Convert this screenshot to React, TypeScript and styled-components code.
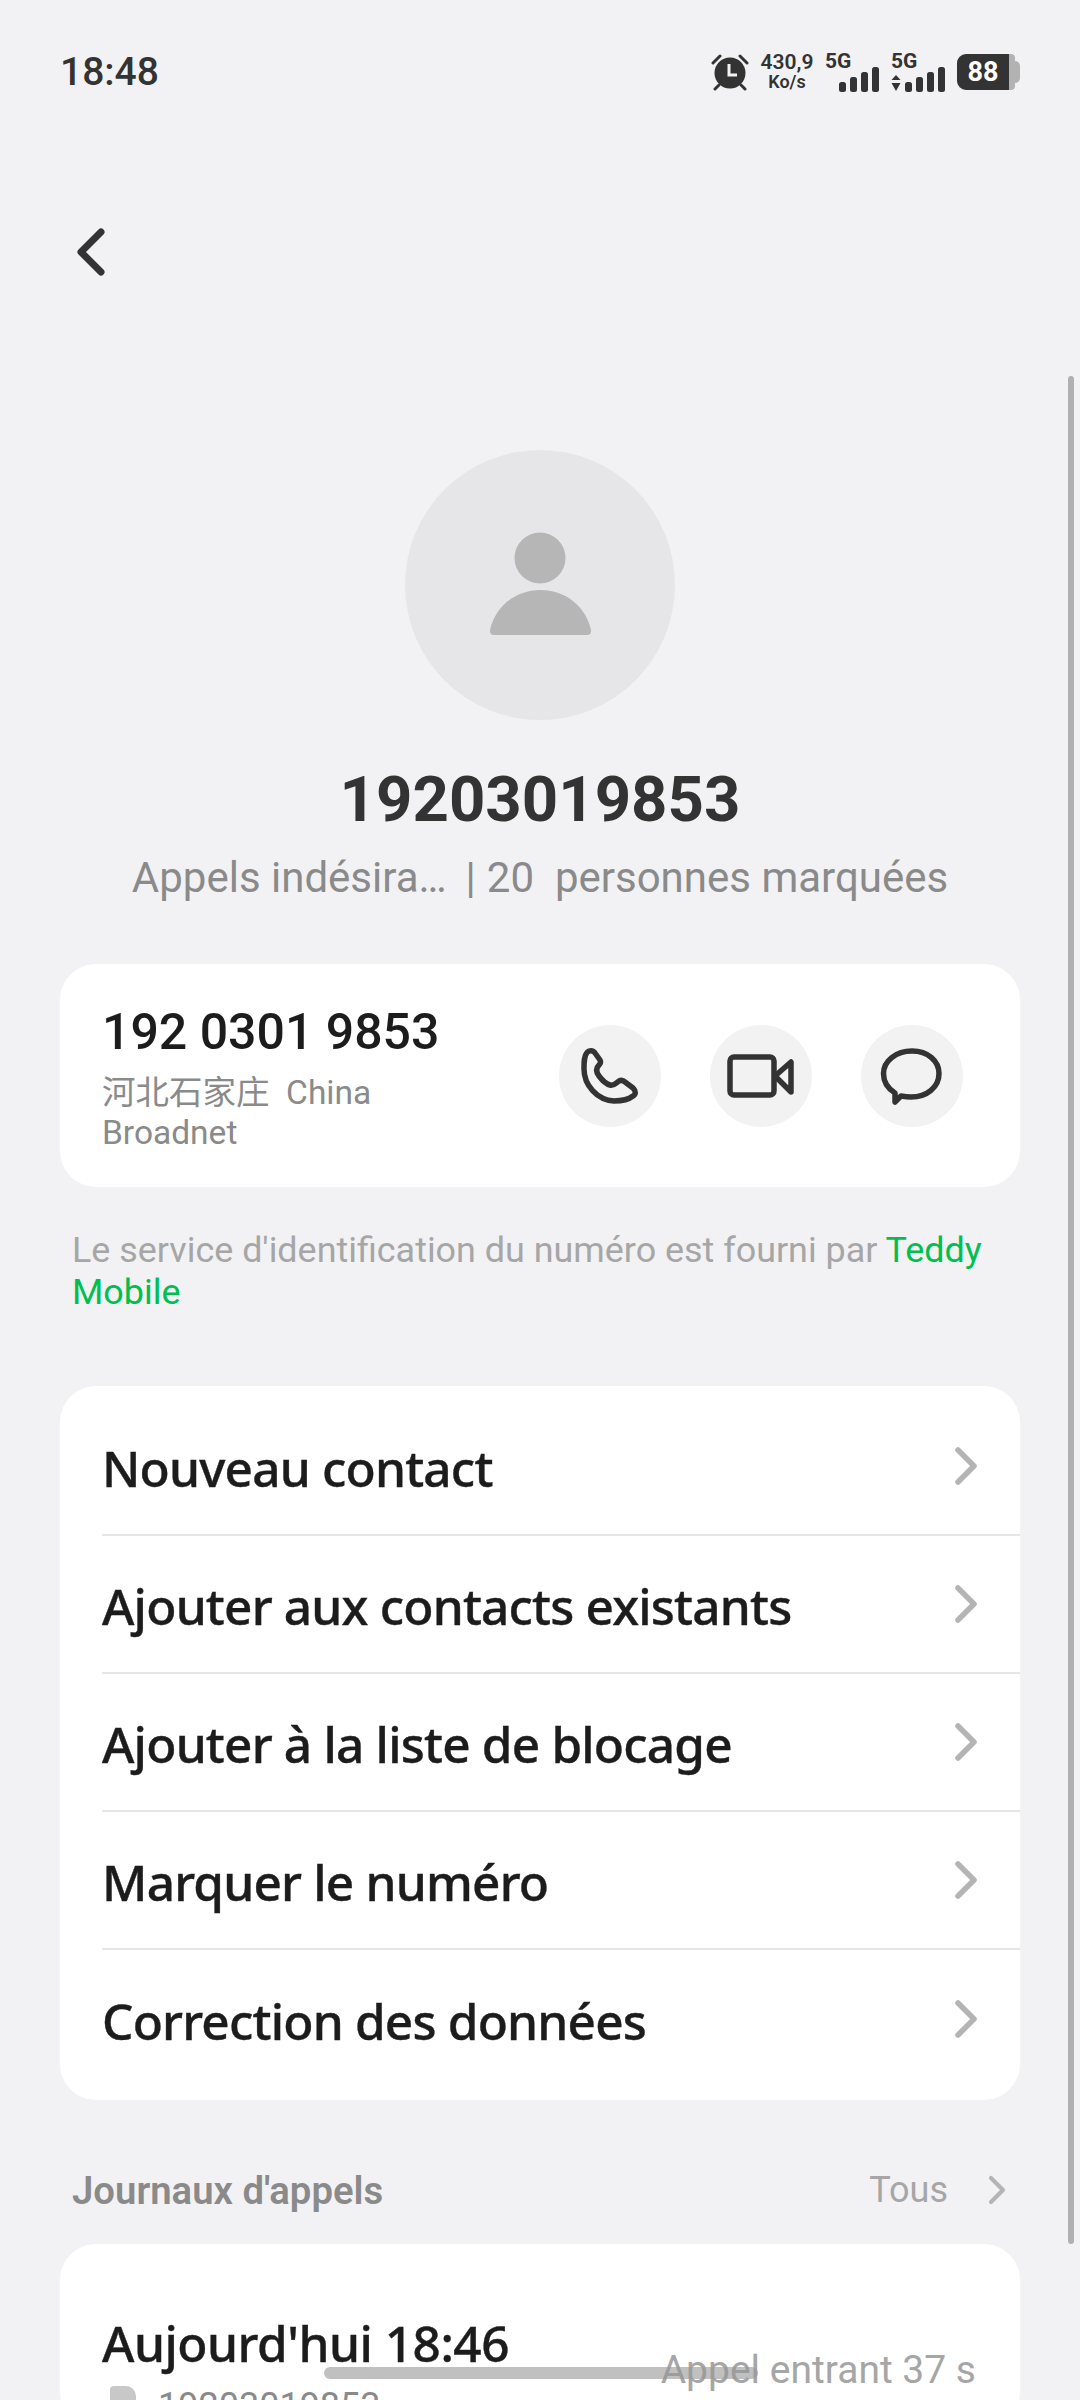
import React from "react";
import styled, { createGlobalStyle } from "styled-components";

const colors = {
  page: "#f2f2f4",
  white: "#ffffff",
  ink: "#1c1c1c",
  dark: "#333333",
  gray: "#8a8a8a",
  muted: "#a6a6a6",
  chevron: "#b4b4b4",
  green: "#00bf50",
  line: "#e6e6e6",
};

const GlobalStyle = createGlobalStyle`
  html, body {
    margin: 0;
    padding: 0;
    background: ${colors.page};
  }
  * {
    box-sizing: border-box;
  }
`;

const Screen = styled.div`
  position: relative;
  width: 1080px;
  height: 2400px;
  overflow: hidden;
  background: ${colors.page};
  font-family: Roboto, "Noto Sans CJK SC", sans-serif;
`;

const StatusBar = styled.div`
  display: flex;
  align-items: center;
  justify-content: space-between;
  height: 144px;
  padding: 0 60px;
`;

const Clock = styled.span`
  font-size: 39px;
  font-weight: 500;
  color: ${colors.dark};
`;

const StatusIcons = styled.div`
  display: flex;
  align-items: center;
  height: 36px;
`;

const Speed = styled.div`
  display: flex;
  flex-direction: column;
  align-items: center;
  width: 54px;
  margin-left: 11px;
  color: ${colors.dark};
  line-height: 19px;

  b {
    font-size: 21px;
    font-weight: 600;
  }

  span {
    font-size: 18px;
    font-weight: 600;
  }
`;

const Signal = styled.div<{ gap: number }>`
  display: flex;
  flex-direction: column;
  width: 56px;
  margin-left: ${(p) => p.gap}px;
  color: ${colors.dark};
`;

const SignalLabel = styled.span`
  height: 14px;
  font-size: 21px;
  font-weight: 700;
  line-height: 16px;
`;

const Battery = styled.div`
  display: flex;
  align-items: center;
  margin-left: 10px;
`;

const BatteryBody = styled.div`
  display: flex;
  align-items: center;
  justify-content: center;
  width: 58px;
  height: 36px;
  padding-right: 6px;
  border-radius: 9px 4px 4px 9px;
  background: linear-gradient(
    90deg,
    ${colors.dark} 0,
    ${colors.dark} 52px,
    #b2b2b2 52px
  );
  color: ${colors.white};
  font-size: 27px;
  font-weight: 700;
`;

const BatteryTip = styled.div`
  width: 5px;
  height: 22px;
  border-radius: 0 5px 5px 0;
  background: #b2b2b2;
`;

const NavRow = styled.div`
  display: flex;
  align-items: center;
  height: 212px;
  padding-left: 72px;
`;

const Header = styled.div`
  display: flex;
  flex-direction: column;
  align-items: center;
  margin-top: 94px;
`;

const Avatar = styled.div`
  width: 270px;
  height: 270px;
  border-radius: 50%;
  background: #e6e6e8;

  svg {
    display: block;
  }
`;

const Name = styled.div`
  margin-top: 42px;
  font-size: 63.5px;
  font-weight: 700;
  line-height: 76px;
  color: ${colors.dark};
`;

const Tagline = styled.div`
  margin-top: 14px;
  font-size: 42px;
  line-height: 52px;
  color: ${colors.gray};
  white-space: pre;
`;

const TaglineBar = styled.span`
  margin: 0 11px 0 19px;
`;

const Card = styled.div<{ top: number }>`
  margin: ${(p) => p.top}px 60px 0;
  border-radius: 36px;
  background: ${colors.white};
`;

const NumberCard = styled(Card)`
  display: flex;
  align-items: center;
  justify-content: space-between;
  height: 223px;
  padding: 0 57px 0 42px;
`;

const NumberInfo = styled.div`
  display: flex;
  flex-direction: column;
  padding-top: 4px;
`;

const PhoneNumber = styled.div`
  margin-bottom: 11px;
  font-size: 50px;
  font-weight: 500;
  line-height: 60px;
  color: ${colors.ink};
`;

const Carrier = styled.div`
  font-size: 33.5px;
  line-height: 40px;
  color: ${colors.gray};
  white-space: pre;
`;

const Actions = styled.div`
  display: flex;
  gap: 49px;
`;

const ActionButton = styled.div`
  width: 102px;
  height: 102px;
  border-radius: 50%;
  background: #f2f2f2;

  svg {
    display: block;
    fill: none;
    stroke: ${colors.dark};
    stroke-width: 5.5;
    stroke-linejoin: round;
    stroke-linecap: round;
  }
`;

const Note = styled.div`
  margin: 42px 60px 0 72px;
  font-size: 35.9px;
  line-height: 42px;
  color: ${colors.muted};

  span {
    color: ${colors.green};
  }
`;

const MenuCard = styled(Card)`
  padding: 12px 0 12px 42px;
`;

const MenuRow = styled.div`
  display: flex;
  align-items: center;
  justify-content: space-between;
  height: 138px;
  padding-right: 42px;
  border-bottom: 2px solid ${colors.line};

  &:last-child {
    border-bottom: none;
  }
`;

const MenuLabel = styled.span`
  padding-top: 4px;
  font-family: "Noto Sans", "Open Sans", sans-serif;
  font-size: 49.5px;
  font-weight: 500;
  letter-spacing: -0.8px;
  -webkit-text-stroke: 0.4px ${colors.ink};
  color: ${colors.ink};
`;

const SectionHeader = styled.div`
  display: flex;
  align-items: center;
  justify-content: space-between;
  height: 50px;
  margin: 65px 60px 0 72px;
`;

const SectionTitle = styled.span`
  font-size: 38.3px;
  font-weight: 600;
  color: ${colors.gray};
`;

const SectionAll = styled.div`
  display: flex;
  align-items: center;
  gap: 40px;
  padding-right: 14px;
  font-size: 36px;
  color: ${colors.muted};
`;

const LogCard = styled(Card)`
  display: grid;
  grid-template-columns: 1fr auto;
  align-items: center;
  padding: 70px 44px 0 42px;
`;

const LogDate = styled.div`
  font-family: "Noto Sans", "Open Sans", sans-serif;
  font-size: 49.5px;
  font-weight: 500;
  letter-spacing: -0.5px;
  -webkit-text-stroke: 0.4px ${colors.ink};
  line-height: 58px;
  color: ${colors.ink};
`;

const LogNumber = styled.div`
  display: flex;
  align-items: center;
  gap: 22px;
  margin: 12px 0 0 8px;
  font-size: 36px;
  line-height: 44px;
  color: ${colors.gray};
`;

const SimIcon = styled.div`
  width: 26px;
  height: 40px;
  border-radius: 4px 10px 4px 4px;
  background: #c8c8c8;
`;

const LogType = styled.div`
  margin-bottom: 2px;
  font-size: 39px;
  color: ${colors.muted};
`;

const HomeBar = styled.div`
  position: absolute;
  left: 324px;
  top: 2367px;
  width: 434px;
  height: 12px;
  border-radius: 6px;
  background: rgba(150, 150, 150, 0.6);
`;

const ScrollThumb = styled.div`
  position: absolute;
  left: 1068px;
  top: 376px;
  width: 6px;
  height: 1868px;
  border-radius: 3px;
  background: #b0b0b0;
`;

const Chevron = ({ color, w, h }: { color: string; w: number; h: number }) => (
  <svg width={w} height={h} viewBox="0 0 24 40" fill="none">
    <path
      d="M4 4 L20 20 L4 36"
      stroke={color}
      strokeWidth={5.5}
      strokeLinecap="round"
      strokeLinejoin="round"
    />
  </svg>
);

const AlarmIcon = () => (
  <svg width="38" height="38" viewBox="0 0 38 38" fill="#333">
    <circle cx="19" cy="20" r="15.5" />
    <path
      d="M2 10 L9 3 M36 10 L29 3 M8 32 L4 36 M30 32 L34 36"
      stroke="#333"
      strokeWidth="3"
      strokeLinecap="round"
    />
    <path d="M18 11 V22 H26" fill="none" stroke="#f2f2f4" strokeWidth="3" />
  </svg>
);

const bars = [
  { x: 14, h: 10 },
  { x: 25, h: 15 },
  { x: 36, h: 20 },
  { x: 47, h: 25 },
];

const SignalBars = ({ arrows }: { arrows?: boolean }) => (
  <svg width="56" height="25" viewBox="0 0 56 25" fill="#333">
    {bars.map((b) => (
      <rect
        key={b.x}
        x={b.x}
        y={25 - b.h}
        width="7"
        height={b.h}
        rx="2.5"
      />
    ))}
    {arrows && <path d="M5 8 L9.500 13 H0.500Z M5 24 L9.500 16 H0.500Z" />}
  </svg>
);

const menuItems = [
  "Nouveau contact",
  "Ajouter aux contacts existants",
  "Ajouter à la liste de blocage",
  "Marquer le numéro",
  "Correction des données",
];

export default function App() {
  return (
    <Screen>
      <GlobalStyle />
      <StatusBar>
        <Clock>18:48</Clock>
        <StatusIcons>
          <AlarmIcon />
          <Speed>
            <b>430,9</b>
            <span>Ko/s</span>
          </Speed>
          <Signal gap={11}>
            <SignalLabel>5G</SignalLabel>
            <SignalBars />
          </Signal>
          <Signal gap={10}>
            <SignalLabel>5G</SignalLabel>
            <SignalBars arrows />
          </Signal>
          <Battery>
            <BatteryBody>88</BatteryBody>
            <BatteryTip />
          </Battery>
        </StatusIcons>
      </StatusBar>

      <NavRow>
        <svg width="36" height="52" viewBox="0 0 36 52" fill="none">
          <path
            d="M29 8 L9 28 L29 48"
            stroke="#333"
            strokeWidth="7"
            strokeLinecap="round"
            strokeLinejoin="round"
          />
        </svg>
      </NavRow>

      <Header>
        <Avatar>
          <svg width="270" height="270" viewBox="0 0 270 270" fill="#b6b6b6">
            <circle cx="135" cy="108" r="25.500" />
            <path d="M85 180 C90 157 110 140 135.500 140 C161 140 181 157 186 180 Q186.500 185 182 185 L89 185 Q84.500 185 85 180Z" />
          </svg>
        </Avatar>
        <Name>19203019853</Name>
        <Tagline>
          Appels indésira…<TaglineBar>|</TaglineBar>20  personnes marquées
        </Tagline>
      </Header>

      <NumberCard top={60}>
        <NumberInfo>
          <PhoneNumber>192 0301 9853</PhoneNumber>
          <Carrier>河北石家庄  China</Carrier>
          <Carrier>Broadnet</Carrier>
        </NumberInfo>
        <Actions>
          <ActionButton>
            <svg width="102" height="102" viewBox="0 0 102 102">
              <path d="M28 27.500 C30 25 34 25 36 28 L41 35 C42 37 42 38 40 40 C37 43 37 47 40 51 C43 55 47 59 51 60 C55 61 57 58 60 56 C62 55 64 55 66 57 L74 63 C77 66 77 69 74 71 C69 75 62 76 55 76 C38 75 25 60 25 44 C25 37 25 31 28 27.500 Z" />
            </svg>
          </ActionButton>
          <ActionButton>
            <svg width="102" height="102" viewBox="0 0 102 102">
              <rect x="20" y="32" width="44" height="38" rx="4" />
              <path d="M65 51 L81 37 V67 Z" />
            </svg>
          </ActionButton>
          <ActionButton>
            <svg width="102" height="102" viewBox="0 0 102 102">
              <path d="M51 26 C67 26 78 36 78 48.500 C78 62 66 72 50 72 C46 72 43 71.500 40 71 L34 77 L34 68 C26 63 22.500 56 22.500 48.500 C22.500 36 35 26 51 26 Z" />
            </svg>
          </ActionButton>
        </Actions>
      </NumberCard>

      <Note>
        Le service d'identification du numéro est fourni par{" "}
        <span>Teddy Mobile</span>
      </Note>

      <MenuCard top={73}>
        {menuItems.map((item) => (
          <MenuRow key={item}>
            <MenuLabel>{item}</MenuLabel>
            <Chevron color={colors.chevron} w={24} h={40} />
          </MenuRow>
        ))}
      </MenuCard>

      <SectionHeader>
        <SectionTitle>Journaux d'appels</SectionTitle>
        <SectionAll>
          Tous
          <Chevron color={colors.chevron} w={18} h={30} />
        </SectionAll>
      </SectionHeader>

      <LogCard top={29}>
        <div>
          <LogDate>Aujourd'hui 18:46</LogDate>
          <LogNumber>
            <SimIcon />
            19203019853
          </LogNumber>
        </div>
        <LogType>Appel entrant 37 s</LogType>
      </LogCard>

      <HomeBar />
      <ScrollThumb />
    </Screen>
  );
}
